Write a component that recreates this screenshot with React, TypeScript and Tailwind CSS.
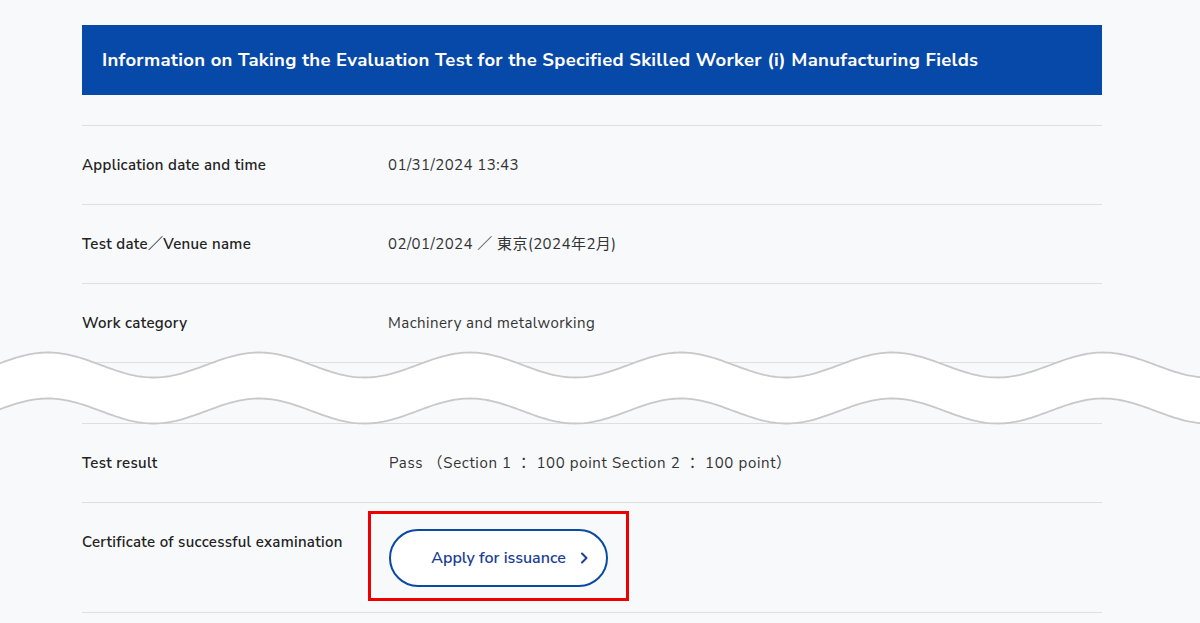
import React from 'react';

const FONT = 'font-["Nunito_Sans","Lato","Noto_Sans","Noto_Sans_CJK_JP",sans-serif]';

function wavePoints(centerY: number) {
    const pts: string[] = [];
    for (let x = -10; x <= 1210; x += 3) {
        const y = centerY - 12.5 * Math.cos((2 * Math.PI * (x - 48)) / 211);
        pts.push(`${x},${y.toFixed(2)}`);
    }
    return pts;
}

function WaveBreak() {
    const top = wavePoints(25);
    const bottom = wavePoints(71);
    const fill = `M${top.join(' L')} L${[...bottom].reverse().join(' L')} Z`;

    return (
        <div className="relative h-[60px] w-full">
            <svg
                className="absolute left-0 top-[-23px]"
                width="1200"
                height="100"
                viewBox="0 0 1200 100"
            >
                <path d={fill} fill="#ffffff" />
                <path d={`M${top.join(' L')}`} fill="none" stroke="#c8c8c8" strokeWidth="1.8" />
                <path d={`M${bottom.join(' L')}`} fill="none" stroke="#c8c8c8" strokeWidth="1.8" />
            </svg>
        </div>
    );
}

function Row({ label, children }: { label: string; children: React.ReactNode }) {
    return (
        <div className="flex border-b border-[#dedfe1] py-[27px] leading-6">
            <div className="w-[306px] shrink-0 text-[15px] font-semibold tracking-[0.32px] text-[#222]">{label}</div>
            <div className="text-[15px] tracking-[0.45px] text-[#333]">{children}</div>
        </div>
    );
}

export default function App() {
    return (
        <div className={`min-h-[623px] w-full overflow-hidden bg-[#f8f9fb] pt-[25px] ${FONT}`}>
            <div className="ml-[82px] w-[1020px]">
                <div className="flex h-[70px] items-center bg-[#0749a8] px-[20px]">
                    <h1 className="pt-[2px] text-[18.5px] font-bold tracking-[0.3px] text-white">
                        Information on Taking the Evaluation Test for the Specified Skilled Worker (i) Manufacturing Fields
                    </h1>
                </div>
                <div className="mt-[30px] border-t border-[#dedfe1]">
                    <Row label="Application date and time">01/31/2024 13:43</Row>
                    <Row label="Test date／Venue name">02/01/2024 ／ 東京(2024年2月)</Row>
                    <Row label="Work category">Machinery and metalworking</Row>
                </div>
            </div>

            <WaveBreak />

            <div className="ml-[82px] w-[1020px]">
                <div className="border-t border-[#dedfe1]">
                    <Row label="Test result">
                        <span className="ml-px tracking-[0.65px]">Pass （Section 1 ： 100 point Section 2 ： 100 point）</span>
                    </Row>
                    <div className="flex items-start border-b border-[#dedfe1] pb-[11px] pt-[27px] leading-6">
                        <div className="w-[286px] shrink-0 text-[15px] font-semibold tracking-[0.3px] text-[#222]">
                            Certificate of successful examination
                        </div>
                        <div className="-mt-[19px] border-[3px] border-[#ee0000] px-[18px] pb-[11px] pt-[15px]">
                            <button className="flex h-[58px] w-[219px] items-center justify-center gap-[14px] rounded-full border-2 border-[#0b4aa2] bg-white pl-[22px] text-[16px] font-semibold text-[#1b3f95]">
                                <span>Apply for issuance</span>
                                <svg width="8" height="12" viewBox="0 0 8 12" fill="none">
                                    <path d="M2 1.5 L6.5 6 L2 10.5" stroke="#1b3f95" strokeWidth="2" strokeLinecap="round" strokeLinejoin="round" />
                                </svg>
                            </button>
                        </div>
                    </div>
                </div>
            </div>
        </div>
    );
}
